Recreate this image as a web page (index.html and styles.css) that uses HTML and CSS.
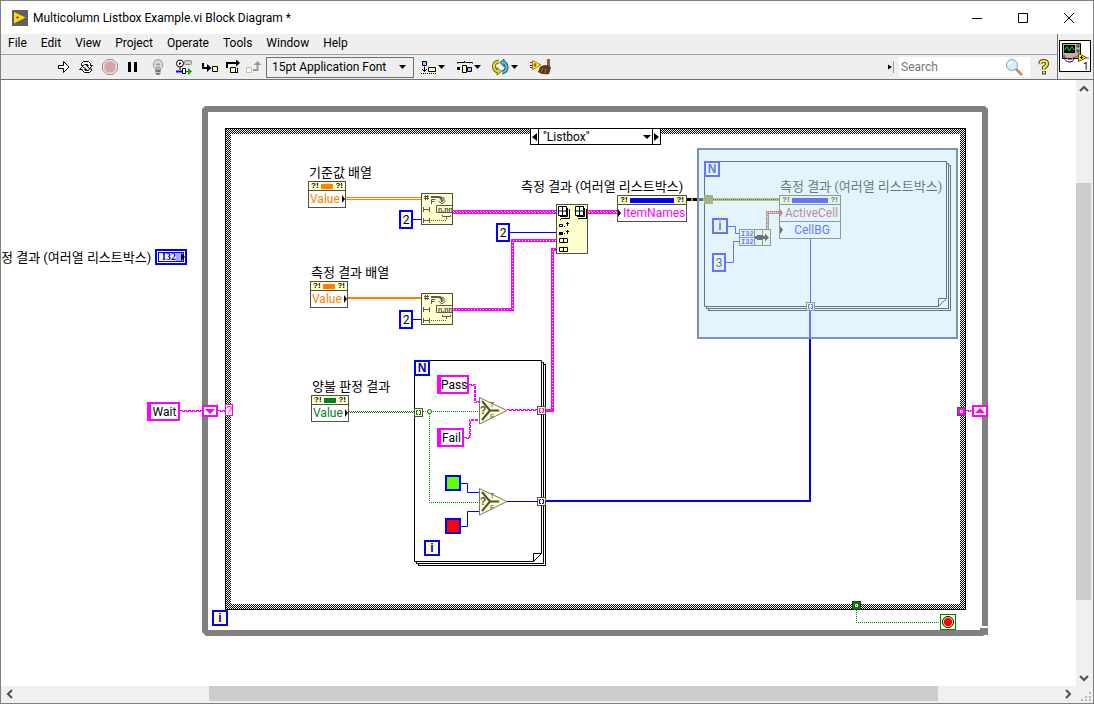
FILE: index.html
```html
<!DOCTYPE html>
<html lang="ko">
<head>
<meta charset="utf-8">
<title>Multicolumn Listbox Example.vi Block Diagram *</title>
<link rel="stylesheet" href="styles.css">
</head>
<body>
<div class="window">
  <header class="titlebar">
    <svg class="app-icon" width="16" height="16" viewBox="0 0 16 16"><rect width="16" height="16" fill="#5f6064"/><path d="M2 2L13.500 7.500L2 13.500Z" fill="#fd0"/><path d="M4 7.500h3M5.500 6v3" stroke="#5f6064"/></svg>
    <h1 class="title">Multicolumn Listbox Example.vi Block Diagram *</h1>
    <div class="window-buttons">
      <button class="winbtn" aria-label="Minimize"><svg width="12" height="12"><path d="M1 6.500H11" stroke="#000"/></svg></button>
      <button class="winbtn" aria-label="Maximize"><svg width="12" height="12"><path d="M1.500 1.500H10.500V10.500H1.500Z" stroke="#000" fill="none"/></svg></button>
      <button class="winbtn" aria-label="Close"><svg width="12" height="12"><path d="M1 1L11 11M11 1L1 11" stroke="#000"/></svg></button>
    </div>
  </header>

  <div class="bars">
    <div class="bars-main">
      <nav class="menubar">
        <button class="menu">File</button><button class="menu">Edit</button><button class="menu">View</button><button class="menu">Project</button><button class="menu">Operate</button><button class="menu">Tools</button><button class="menu">Window</button><button class="menu">Help</button>
      </nav>
      <div class="toolbar">
        <div class="tools tools-run">
          <button class="tool" aria-label="Run"><svg width="16" height="16"><path d="M2.500 6.500H7.500V2.500L13 8L7.500 13.500V9.500H2.500Z" fill="#fff" stroke="#000"/></svg></button>
          <button class="tool" aria-label="Run continuously"><svg width="18" height="16" fill="#fff" stroke="#000"><path d="M3.500 6.500V4.500L5.500 2.500H10.500L12.500 4.500V6.500H14.500L11.500 9.500L8.500 6.500H10.500L9.500 5.500H6.500L5.500 6.500Z"/><path d="M13.500 10V11.500L11.500 13.500H6.500L4.500 11.500V10.500H1.500L4.500 7.500L8.500 10.500H6.500L7.500 11.500H10.500L11.500 9.500Z"/></svg></button>
          <button class="tool" aria-label="Abort"><svg width="16" height="16"><path d="M5 .5H11L15.500 5V11L11 15.500H5L.5 11V5Z" fill="#f4dada" stroke="#9a8f8f"/><path d="M5.500 2.500H10.500L13.500 5.500V10.500L10.500 13.500H5.500L2.500 10.500V5.500Z" fill="#d6a5a8"/></svg></button>
          <button class="tool" aria-label="Pause"><svg width="12" height="12"><path d="M1 1h3v10h-3zM7 1h3v10h-3z"/></svg></button>
        </div>
        <div class="tools tools-debug">
          <button class="tool" aria-label="Highlight execution"><svg width="14" height="18"><path d="M7 1.500A5.200 5.200 0 0 0 4.500 11V12.500H9.500V11A5.200 5.200 0 0 0 7 1.500Z" fill="#ddd" stroke="#999"/><path d="M5 7L6 5.500L7 7L8 5.500L9 7M6 8v4M8 8v4" stroke="#888" fill="none"/><path d="M4.500 12h5v4h-1v1h-3v-1h-1z" fill="#777"/><path d="M4 14.500h6" stroke="#ccc"/></svg></button>
          <button class="tool" aria-label="Retain wire values"><svg width="18" height="16"><circle cx="5" cy="4.500" r="3.500" fill="#fff" stroke="#000"/><path d="M4 3v3l2.500-1.500z"/><path d="M5 8v3" stroke="#000"/><rect x="9.500" y="1.500" width="7" height="4" rx="1" fill="#ccc" stroke="#888"/><path d="M1 12.500h6" stroke="#00f" stroke-width="2"/><path d="M7.500 9.500h3v5h-3z" fill="#fff" stroke="#000"/><path d="M11 12.500h3" stroke="#0a0"/><path d="M13 9l4 3.500-4 3.500z" fill="#0a0"/></svg></button>
          <button class="tool" aria-label="Step into"><svg width="18" height="16"><path d="M2 4v5h6" stroke="#000" stroke-width="2" fill="none"/><path d="M6 5l4.500 4-4.500 4z"/><path d="M11.500 7.500h5v5h-5z" fill="#ffffa8" stroke="#000"/></svg></button>
        </div>
        <div class="tools tools-step">
          <button class="tool" aria-label="Step over"><svg width="16" height="16"><path d="M2 9V4h9" stroke="#000" stroke-width="2" fill="none"/><path d="M11 .5l4 3.500-4 3.500z"/><path d="M5.500 8.500h5v5h-5z" fill="#ffffa8" stroke="#000"/><path d="M10 13.500h3M12.500 9v4" stroke="#000"/></svg></button>
          <button class="tool" aria-label="Step out"><svg width="18" height="16"><path d="M2.500 8.500h5v5h-5z" fill="#ffffd0" stroke="#bbb"/><path d="M9 11h4.500V5" stroke="#999" stroke-width="2" fill="none"/><path d="M9.500 6L13.500 2l4 4z" fill="#999"/></svg></button>
        </div>
        <select class="font-select" aria-label="Text settings"><option>15pt Application Font</option></select>
        <div class="tools tools-arrange">
          <button class="tool" aria-label="Align objects"><svg width="26" height="16"><path d="M2.500 2.500h4v4h-4z" fill="#8cf" stroke="#000"/><path d="M4.500 7.500v5M2 10l2.500 2.500L7 10" stroke="#000" fill="none"/><path d="M8.500 8.500h7v4h-7z" fill="#ffffa8" stroke="#000"/><path d="M1 14.500h16" stroke="#000" stroke-dasharray="1 1"/><path d="M18 6h7l-3.500 4z"/></svg></button>
          <button class="tool" aria-label="Distribute objects"><svg width="26" height="16"><path d="M1.500 4.500V3.500H8.500V2M9.500 3.500H16.500V4.500" stroke="#000" fill="none"/><path d="M1 8h3v3h-3z"/><path d="M6.500 6.500h4v7h-4z" fill="#ffffa8" stroke="#000"/><path d="M11.500 8.500h4v4h-4z" fill="#8cf" stroke="#000"/><path d="M18 6h7l-3.500 4z"/></svg></button>
          <button class="tool" aria-label="Reorder"><svg width="28" height="18" fill="none"><path d="M8 3.500Q2.500 4 3 9Q3.500 13 7 13.500" stroke="#6f6b18" stroke-width="4"/><path d="M6 9.500L10 13.500L6 17Z" fill="#e8e020" stroke="#6f6b18"/><path d="M8 3.500Q2.500 4 3 9Q3.500 13 7 13.500" stroke="#e8e020" stroke-width="2"/><path d="M11 14.500Q16 13 15.500 9Q15 5 12 4.500" stroke="#1f5f76" stroke-width="4"/><path d="M13 1L9 4.500L13 8.500Z" fill="#5cb8d0" stroke="#1f5f76"/><path d="M11 14.500Q16 13 15.500 9Q15 5 12 4.500" stroke="#5cb8d0" stroke-width="2"/><path d="M20 7h7l-3.500 4z" fill="#000"/></svg></button>
          <button class="tool" aria-label="Clean up diagram"><svg width="22" height="18"><path d="M0 4.500h3M0 9.500h3" stroke="#e00"/><path d="M0 7.500h3" stroke="#00e"/><path d="M2.500 2.500L11 7L2.500 11.500Z" fill="#fe3" stroke="#b07a00"/><path d="M5 5v4M3.500 7h3" stroke="#840"/><path d="M17 1h3v7h-3z" fill="#9b5b2c"/><path d="M10 9Q16 5 21 9L19 16Q12 17 8 14Z" fill="#5c3517"/><path d="M11 14l2-4M15 15l1-5" stroke="#a57b4a"/></svg></button>
        </div>
        <div class="search-area">
          <svg width="8" height="14"><path d="M1 4.500l4 2.500-4 2.500z"/><path d="M6.500 1v12" stroke="#999"/></svg>
          <div class="search">
            <input class="search-input" type="text" placeholder="Search" aria-label="Search">
            <svg width="18" height="18"><path d="M11 11l6 6" stroke="#c4905a" stroke-width="3"/><circle cx="7" cy="7" r="5.500" fill="#d5f0ff" stroke="#7da6cc"/><path d="M4 7Q4 4 7 4" stroke="#fff" stroke-width="2" fill="none"/></svg>
          </div>
          <button class="tool help" aria-label="Context help"><svg width="12" height="16"><path d="M2.500 5Q2 2 5.500 2Q9.500 2 9 5Q9 7 6 8.500V10.500M6 12v3.500" stroke="#444" stroke-width="4" fill="none"/><path d="M2.500 5Q2 2 5.500 2Q9.500 2 9 5Q9 7 6 8.500V10.500M6 12.500v2" stroke="#f7ee20" stroke-width="2" fill="none"/></svg></button>
        </div>
      </div>
    </div>
    <div class="vi-pane">
      <svg width="32" height="32" viewBox="0 0 32 32"><rect x=".5" y=".5" width="31" height="31" fill="#fff" stroke="#000"/><path d="M3.500 3.500h18v15h-18z" fill="#bdb69a" stroke="#000"/><path d="M5 5h11v8H5z" fill="#000"/><path d="M5.500 10L8 6.500L10 11L13 6.500L15 10" stroke="#0d3" fill="none"/><circle cx="19" cy="6" r="1.200" fill="none" stroke="#333"/><circle cx="19" cy="11" r="1.200" fill="none" stroke="#333"/><path d="M5 15v2Q6 22 11 22Q14 22 15 19" stroke="#00c" fill="none"/><path d="M7 17Q10 22 14 18L18 16H21M24 18H30" stroke="#f22" fill="none"/><path d="M19.500 13.500L27.500 17.500L19.500 21.500Z" fill="#fe2" stroke="#550"/><path d="M21 17.500h3M22.500 16v3" stroke="#000"/><text x="24" y="30" class="vi-number">1</text></svg>
    </div>
  </div>

  <div class="workspace">
    <main class="canvas">
      <svg class="wires" width="1075" height="606" viewBox="1 80 1075 606">
        <defs>
          <pattern id="hatch" width="4" height="4" patternUnits="userSpaceOnUse"><rect width="4" height="4" fill="#000"/><path d="M0 0h1v1h-1zM2 0h1v1h-1zM1 1h1v1h-1zM3 1h1v1h-1zM0 2h1v1h-1zM2 2h1v1h-1zM1 3h1v1h-1zM3 3h1v1h-1z" fill="#fff"/></pattern>
          <g id="format">
            <rect x=".5" y=".5" width="31" height="31" fill="#ffffce" stroke="#4f4f42"/>
            <g fill="none" stroke="#5a5a50"><path d="M3 3.500h5M3 5.500h5M4.500 2v5M6.500 2v5"/><path d="M10.500 11V6.500h4M10.500 8.500h3"/><path d="M10 4h7Q21 4 21 9" stroke-width="2"/><path d="M17.500 8l3.500 3 3.500-3M18 3.500l5 1.500v3"/><path d="M2.500 14v5M8.500 14v5M3 16.500h5"/><path d="M15.500 12.500h16v7h-16z"/><path d="M2.500 25v5M8.500 25v5M3 27.500h5"/><path d="M10 27.500h15" stroke-dasharray="1 1"/><path d="M21.500 22v1.500h8V22M25.500 24v2"/></g>
            <text x="17" y="19" class="glyph-number">n.nn</text>
          </g>
          <g id="select">
            <path d="M.5.5L28 13.500L.5 27Z" fill="#ffffce" stroke="#77776a"/>
            <path d="M3 4L11 13.500H20M11 13.500L3 23" stroke="#4f4f42" stroke-width="2" fill="none"/>
            <text x="1" y="17" class="glyph-q">?</text><text x="11" y="10" class="glyph-s">T</text><text x="11" y="22" class="glyph-s">F</text>
          </g>
          <g id="grid"><path d="M3 12.500h8.500V3M2 10.500h7.500V2" stroke="#000" fill="none"/><path d="M.5.5h8v9h-8z" fill="#fff" stroke="#000"/><path d="M4.500.5v9M0 5h9" stroke="#000"/></g>
          <g id="tunnel-brackets"><path d="M4 2.500H2.500V6.500H4M5 2.500H6.500V6.500H5"/></g>
        </defs>

        <path d="M205 106H985L988 109V626H982V112H208V630H980V628H988V635H984L983 636H206L202 632V109Z" fill="#808080" fill-rule="evenodd"/>
        <path d="M225 128H966V610H225ZM231 134V604H960V134Z" fill="url(#hatch)" fill-rule="evenodd"/>
        <rect x="225.500" y="128.500" width="740" height="481" fill="none" stroke="#000"/>

        <g fill="#fff" stroke="#000">
          <rect x="418.500" y="364.500" width="127" height="201"/><rect x="416.500" y="362.500" width="127" height="201"/><path d="M414.500 360.500H541.500V553.500L533.500 561.500H414.500ZM533.500 561.500V553.500H541.500"/>
          <rect x="708.500" y="165.500" width="242" height="145"/><rect x="706.500" y="163.500" width="242" height="145"/><path d="M704.500 161.500H946.500V298.500L938.500 306.500H704.500ZM938.500 306.500V298.500H946.500"/>
        </g>

        <g fill="none" stroke="#ff8000"><path d="M346 197.500H421M346 199.500H421"/><path d="M348 298H421" stroke-width="2"/></g>
        <g fill="none" stroke="#00f"><path d="M413 219.500H421M413 319.500H421M510 232.500H556M461 483.500H467.500V492.500H479M461 526.500H467.500V511.500H479M728 226.500H735.500V233.500H739M726 262.500H733.500V241.500H739M810.500 239V302"/></g>
        <path d="M507 501.500H537" stroke="#00c"/>
        <path d="M546 501H810V310" fill="none" stroke="#00f" stroke-width="2"/>

        <g fill="none" stroke="#f0f"><path d="M453 212H556M588 212H617" stroke-width="4"/><path d="M453 309.500H512.500V240.500H556M546 410.500H552.500V249.500H556" stroke-width="3"/></g>
        <g fill="none" stroke="#fff" stroke-dasharray="1 2"><path d="M453 211.500H556M588 211.500H617M454 212.500H556M589 212.500H617M453 309.500H512.500V240.500H556M552.500 408V249.500H556"/></g>
        <g fill="none" stroke="#f0f" stroke-dasharray="3 1">
          <path d="M180 410.500H202M218 410.500H225M966 410.500H972M469 384.500H475.500V401.500H479M464 437.500H470.500V420.500H479M507 409.500H537"/>
          <path d="M182 411.500H202M220 411.500H225M968 411.500H972M471 385.500H474.500V402.500H479M466 438.500H469.500V419.500H479M509 410.500H537"/>
        </g>
        <g fill="none" stroke="#008000" stroke-dasharray="1 1"><path d="M349 411.500H414M350 412.500H414M423 411.500H479M429.500 412V502.500H479M856.500 610V622.500H940"/></g>
        <circle cx="429.500" cy="411.500" r="2" fill="#fff" stroke="#008000"/>
        <path d="M687 199.500H779" stroke="#a09800" stroke-width="3"/><path d="M687 199.500H704" stroke="#000" stroke-dasharray="4 2" stroke-width="3"/><path d="M713 199.500H779" stroke="#000" stroke-dasharray="1 1"/>
        <rect x="704" y="195" width="9" height="9" fill="#807c10"/>
        <path d="M767.500 229V212.500H780" stroke="#b04020" stroke-width="3" fill="none"/><path d="M767.500 229V212.500H780" stroke="#fff" stroke-dasharray="1 1" fill="none"/>

        <use href="#format" x="421" y="193"/>
        <use href="#format" x="421" y="293"/>
        <use href="#select" x="479" y="397"/>
        <use href="#select" x="479" y="488"/>
        <g transform="translate(556 204)">
          <rect x=".5" y=".5" width="31" height="49" fill="#ffffce" stroke="#4f4f42"/>
          <use href="#grid" x="2" y="2"/><use href="#grid" x="19" y="2"/>
          <path d="M4 15.500h1M8 22.500h1M8 29.500h1" stroke="#000"/>
          <path d="M3.500 20.500h3v2h-3zM3.500 34.500h8v4h-8zM7.500 34v5M3.500 43.500h8v4h-8zM7.500 43v5M11.500 18v4M10 19.500h3M11.500 26v4M10 27.500h3" fill="none" stroke="#000"/><path d="M3 28h4v3h-4z"/>
        </g>
        <g transform="translate(739 229)">
          <rect x=".5" y=".5" width="31" height="16" fill="#ffffce" stroke="#4f4f42"/><path d="M1 1h15v15H1z" fill="#fff"/>
          <path d="M0 8.500h16M15.500 0v17M23.500 0v17" stroke="#4f4f42"/><path d="M16 7h2V6h6v1h2V4.500l4 4-4 4V10h-2v1h-6v-1h-2z"/>
          <text x="2" y="7" class="glyph-int">I32</text><text x="2" y="15" class="glyph-int">I32</text>
        </g>

        <g fill="#ffffce" stroke="#4f4f42"><rect x="414.500" y="408.500" width="8" height="8"/><rect x="537.500" y="406.500" width="8" height="8"/><rect x="537.500" y="497.500" width="8" height="8"/><rect x="806.500" y="302.500" width="8" height="8"/></g>
        <g fill="none"><use href="#tunnel-brackets" x="414" y="408" stroke="#008000"/><use href="#tunnel-brackets" x="537" y="406" stroke="#f0f"/><use href="#tunnel-brackets" x="537" y="497" stroke="#00f"/><use href="#tunnel-brackets" x="806" y="302" stroke="#00f"/></g>

        <g stroke="#f0f" stroke-width="2" fill="#ffffce"><rect x="203" y="406" width="14" height="10"/><rect x="973" y="406" width="14" height="10"/></g>
        <path d="M205 409h10l-5 5zM975 413h10l-5-5z" fill="#f0f"/>
        <rect x="225.500" y="404.500" width="7" height="11" fill="#ffffce" stroke="#f0f"/><text x="226" y="414" class="case-q">?</text>
        <rect x="957.500" y="407.500" width="8" height="8" fill="#f0f" stroke="#505050"/><path d="M960.500 410.500h2v2h-2z" fill="#f0f" stroke="#fff"/>
        <rect x="852.500" y="601.500" width="8" height="8" fill="#008000" stroke="#303030"/><path d="M855.500 604.500h2v2h-2z" fill="#008000" stroke="#fff"/>
        <rect x="940.500" y="614.500" width="15" height="15" fill="#ffffce" stroke="#008000"/><circle cx="948" cy="622" r="5.500" fill="#fff" stroke="#000"/><circle cx="948" cy="622" r="4.200" fill="#f00"/>
        <g stroke="#00f" stroke-width="2"><rect x="446" y="476" width="14" height="14" fill="#6f0"/><rect x="446" y="519" width="14" height="14" fill="#f00"/></g>
      </svg>

      <div class="case-selector">
        <button class="case-prev" aria-label="Previous case"></button>
        <select class="case-select" aria-label="Case"><option>"Listbox"</option></select>
        <button class="case-next" aria-label="Next case"></button>
      </div>

      <div class="caption cap-terminal">정 결과 (여러열 리스트박스)</div>
      <div class="caption cap-reference">기준값 배열</div>
      <div class="caption cap-measured">측정 결과 배열</div>
      <div class="caption cap-judged">양불 판정 결과</div>
      <div class="caption cap-items">측정 결과 (여러열 리스트박스)</div>
      <div class="caption cap-cells">측정 결과 (여러열 리스트박스)</div>

      <div class="terminal-i32"><span class="i32-text">I32</span></div>

      <div class="prop prop-reference"><div class="prop-head"><span>?!</span><i class="prop-bar"></i><span>?!</span></div><div class="prop-row out">Value</div></div>
      <div class="prop prop-measured"><div class="prop-head"><span>?!</span><i class="prop-bar"></i><span>?!</span></div><div class="prop-row out">Value</div></div>
      <div class="prop prop-judged"><div class="prop-head"><span>?!</span><i class="prop-bar"></i><span>?!</span></div><div class="prop-row out">Value</div></div>
      <div class="prop prop-items"><div class="prop-head"><span>?!</span><i class="prop-bar"></i><span>?!</span></div><div class="prop-row in">ItemNames</div></div>
      <div class="prop prop-cells"><div class="prop-head"><span>?!</span><i class="prop-bar"></i><span>?!</span></div><div class="prop-row in active">ActiveCell</div><div class="prop-row in">CellBG</div></div>

      <div class="num num-a">2</div>
      <div class="num num-b">2</div>
      <div class="num num-c">2</div>
      <div class="num num-d">3</div>

      <div class="str str-wait">Wait</div>
      <div class="str str-pass">Pass</div>
      <div class="str str-fail">Fail</div>

      <div class="mark mark-n1">N</div>
      <div class="mark mark-n2">N</div>
      <div class="mark mark-i1">i</div>
      <div class="mark mark-i2">i</div>
      <div class="mark mark-i3">i</div>

      <div class="selection"></div>
    </main>
    <div class="vscroll">
      <button class="scroll-btn" aria-label="Scroll up"><svg width="10" height="8"><path d="M1 6L5 2L9 6" stroke="#505050" stroke-width="2" fill="none"/></svg></button>
      <div class="vtrack"><div class="vthumb"></div></div>
      <button class="scroll-btn" aria-label="Scroll down"><svg width="10" height="8"><path d="M1 2L5 6L9 2" stroke="#505050" stroke-width="2" fill="none"/></svg></button>
    </div>
  </div>
  <div class="hscroll">
    <button class="scroll-btn" aria-label="Scroll left"><svg width="8" height="10"><path d="M6 1L2 5L6 9" stroke="#505050" stroke-width="2" fill="none"/></svg></button>
    <div class="htrack"><div class="hthumb"></div></div>
    <button class="scroll-btn" aria-label="Scroll right"><svg width="8" height="10"><path d="M2 1L6 5L2 9" stroke="#505050" stroke-width="2" fill="none"/></svg></button>
    <svg class="grip" width="17" height="16"><path d="M13 6h2v2h-2zM9 10h2v2h-2zM13 10h2v2h-2zM5 13h2v2h-2zM9 13h2v2h-2zM13 13h2v2h-2z" fill="#bbb"/></svg>
  </div>
</div>
</body>
</html>
```
FILE: styles.css
```css
* { box-sizing: border-box; }
body { margin: 0; font: 12px/16px Roboto, "Noto Sans CJK KR", sans-serif; color: #000; }
button { border: 0; padding: 0; background: none; font: inherit; color: inherit; }
svg { display: block; }

.window { display: flex; flex-direction: column; height: 100vh; border: 1px solid #808080; background: #f0f0f0; }

.titlebar { display: flex; align-items: center; height: 33px; padding: 0 1px 0 11px; background: #fff; flex: none; }
.title { margin: 0 0 0 5px; font-size: 12px; font-weight: 400; }
.window-buttons { display: flex; margin-left: auto; }
.winbtn { width: 46px; height: 32px; display: grid; place-items: center; }

.bars { display: flex; flex: none; background: #efefef; border-bottom: 1px solid #707070; }
.bars-main { flex: 1; min-width: 0; }
.menubar { display: flex; gap: 14px; height: 21px; align-items: center; padding: 0 7px 2px; border-bottom: 1px solid #a0a0a0; }
.toolbar { display: flex; align-items: center; height: 24px; padding-left: 51px; }
.tools { display: flex; }
.tool { display: grid; place-items: center; height: 20px; }
.tools-run { margin-right: 1px; }
.tools-run .tool { width: 23px; }
.tools-debug .tool { width: 26px; }
.tools-step .tool { width: 20px; }
.tools-arrange { margin-left: 1px; }
.tools-arrange .tool { width: 36px; }
.font-select { appearance: none; width: 148px; height: 21px; margin: 0 0 0 3px; padding: 0 18px 0 5px; border: 1px solid #707070; border-radius: 0; font: inherit; color: #000; background: url("data:image/svg+xml,%3Csvg xmlns='http://www.w3.org/2000/svg' width='8' height='4'%3E%3Cpath d='M0 0h7L3.500 4z'/%3E%3C/svg%3E") right 6px center no-repeat #efefef; }
.search-area { display: flex; align-items: center; margin-left: auto; padding-right: 6px; }
.search { display: flex; align-items: center; width: 131px; height: 20px; margin-left: 4px; padding-right: 7px; background: #fff; }
.search-input { flex: 1; min-width: 0; height: 20px; padding: 0 2px; border: 0; background: none; font: inherit; }
.search-input::placeholder { color: #777; opacity: 1; }
.help { width: 14px; margin-left: 7px; }
.vi-pane { width: 36px; padding: 6px 0 0 1px; border-left: 1px solid #707070; }
.vi-number { font: 10px Roboto, sans-serif; }

.workspace { display: flex; flex: 1; min-height: 0; }
.canvas { position: relative; flex: 1; min-width: 0; overflow: hidden; background: #fff; }
.vscroll { display: flex; flex-direction: column; width: 17px; background: #f0f0f0; padding-right: 2px; }
.hscroll { display: flex; height: 17px; flex: none; padding-bottom: 1px; background: #f0f0f0; }
.scroll-btn { display: grid; place-items: center; flex: none; width: 17px; height: 17px; }
.vscroll .scroll-btn { width: 15px; }
.hscroll .scroll-btn { height: 16px; }
.vtrack, .htrack { flex: 1; position: relative; }
.vthumb { position: absolute; top: 15%; height: 73%; width: 100%; background: #cdcdcd; }
.hthumb { position: absolute; left: 18%; margin-left: 4px; width: 70%; height: 15px; background: #cdcdcd; }
.grip { flex: none; }

.wires { position: absolute; left: 0; top: 0; }
.glyph-number { font: bold 7px "Liberation Sans", sans-serif; fill: #4f4f42; }
.glyph-q { font: bold 10px "Liberation Sans", sans-serif; fill: #4f4f42; }
.glyph-s { font: 7px "Liberation Sans", sans-serif; fill: #4f4f42; }
.glyph-int { font: bold 7px "Liberation Mono", monospace; fill: #00f; }
.case-q { font: 11px "Liberation Sans", sans-serif; fill: #f0f; }

.case-selector { position: absolute; left: 529px; top: 48px; display: flex; width: 131px; height: 17px; border: 1px solid #000; background: #fff; }
.case-prev, .case-next { width: 8px; display: grid; place-items: center; }
.case-prev { border-right: 1px solid #000; }
.case-next { border-left: 1px solid #000; }
.case-prev::before { content: ""; border: 4px solid transparent; border-left-width: 0; border-right: 5px solid #000; }
.case-next::before { content: ""; border: 4px solid transparent; border-right-width: 0; border-left: 5px solid #000; }
.case-select { appearance: none; flex: 1; min-width: 0; padding: 1px 4px 0; border: 0; border-radius: 0; font: inherit; line-height: 15px; color: #000; background: url("data:image/svg+xml,%3Csvg xmlns='http://www.w3.org/2000/svg' width='8' height='4'%3E%3Cpath d='M0 0h8L4 4z'/%3E%3C/svg%3E") right 1px center no-repeat #fff; }

.caption { position: absolute; font-size: 13px; line-height: 16px; white-space: nowrap; }
.cap-terminal { left: 0; top: 170px; }
.cap-reference { left: 308px; top: 85px; }
.cap-measured { left: 310px; top: 185px; }
.cap-judged { left: 311px; top: 299px; }
.cap-items { left: 520px; top: 99px; }
.cap-cells { left: 779px; top: 99px; }

.terminal-i32 { position: absolute; left: 154px; top: 169px; width: 32px; height: 16px; border: 2px solid #00f; padding: 1px; background: #fff; }
.terminal-i32::after { content: ""; position: absolute; right: 0; top: 2px; border: 4px solid transparent; border-right-width: 0; border-left-color: #000; }
.i32-text { display: block; height: 10px; padding-left: 3px; border: 1px solid #00f; font: bold 10px/8px "Liberation Serif", serif; color: #00c; background: linear-gradient(to right, #fff 70%, #a8a8f8 70%); }

.prop { position: absolute; border: 1px solid #4f4f42; background: #fff; color: var(--type); }
.prop-head { display: flex; align-items: center; justify-content: space-between; gap: 2px; height: 9px; padding: 0 2px; background: #ffffce; border-bottom: 1px solid #4f4f42; font: bold 8px/8px "Liberation Sans", sans-serif; color: #000; }
.prop-bar { flex: 1; height: 5px; background: var(--type); }
.prop-row { position: relative; height: 16px; line-height: 17px; padding: 0 1px; white-space: nowrap; }
.prop-row + .prop-row { border-top: 1px solid #4f4f42; height: 17px; text-align: center; }
.prop-row.in { padding-left: 5px; }
.prop-row.in::before, .prop-row.out::after { content: ""; position: absolute; top: 4px; border: 4px solid transparent; border-right-width: 0; border-left: 3px solid #000; }
.prop-row.in::before { left: 0; }
.prop-row.out::after { right: 0; }
.prop-row.active { color: #b03010; }
.prop-row.active::before { border-left-color: #d02020; }
.prop-reference { left: 307px; top: 101px; width: 38px; height: 27px; --type: #ff8000; }
.prop-measured { left: 309px; top: 201px; width: 38px; height: 27px; --type: #ff8000; }
.prop-judged { left: 310px; top: 315px; width: 38px; height: 27px; --type: #008020; }
.prop-items { left: 616px; top: 115px; width: 70px; height: 27px; --type: #00f; }
.prop-items .prop-row { color: #f0f; }
.prop-cells { left: 778px; top: 115px; width: 62px; height: 44px; --type: #00f; }

.num { position: absolute; width: 14px; height: 19px; border: 2px solid #00f; background: #fff; line-height: 16px; text-align: center; }
.num-a { left: 398px; top: 130px; }
.num-b { left: 398px; top: 230px; }
.num-c { left: 495px; top: 143px; }
.num-d { left: 711px; top: 173px; }

.str { position: absolute; height: 19px; border: 2px solid #f0f; border-left-width: 4px; background: #fff; line-height: 16px; text-align: center; }
.str-wait { left: 146px; top: 322px; width: 33px; }
.str-pass { left: 436px; top: 295px; width: 32px; }
.str-fail { left: 436px; top: 348px; width: 27px; }

.mark { position: absolute; width: 16px; height: 16px; border: 2px solid #00f; background: #ffffce; color: #00c; font: bold 12px/12px "Liberation Sans", sans-serif; text-align: center; }
.mark-n1 { left: 413px; top: 280px; }
.mark-n2 { left: 703px; top: 81px; }
.mark-i1 { left: 423px; top: 460px; }
.mark-i2 { left: 711px; top: 138px; }
.mark-i3 { left: 211px; top: 530px; }

.selection { position: absolute; left: 696px; top: 68px; width: 261px; height: 191px; border: 2px solid #7d92b8; background: rgba(200, 234, 250, .5); background-clip: padding-box; }
```
